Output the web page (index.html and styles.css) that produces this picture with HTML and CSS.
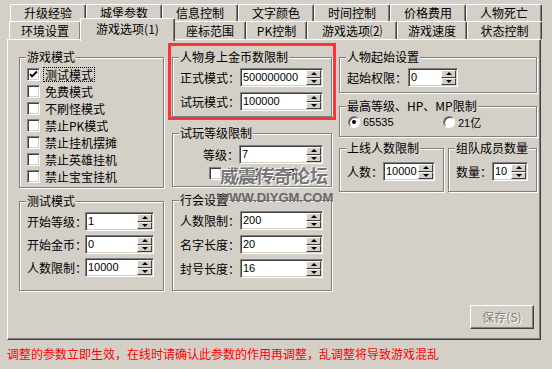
FILE: index.html
```html
<!DOCTYPE html>
<html lang="zh-CN">
<head>
  <meta charset="UTF-8">
  <title>游戏选项</title>
  <link rel="stylesheet" href="styles.css">
</head>
<body>
  <!-- 选项卡 -->
  <div class="tabs">
    <div class="tab-row top">
      <div class="tab">升级经验</div>
      <div class="tab">城堡参数</div>
      <div class="tab">信息控制</div>
      <div class="tab">文字颜色</div>
      <div class="tab">时间控制</div>
      <div class="tab">价格费用</div>
      <div class="tab">人物死亡</div>
    </div>
    <div class="tab-row bottom">
      <div class="tab t1">环境设置</div>
      <div class="tab on">游戏选项(1)</div>
      <div class="tab t3">座标范围</div>
      <div class="tab t4">PK控制</div>
      <div class="tab t5">游戏选项⑵</div>
      <div class="tab t6">游戏速度</div>
      <div class="tab t7">状态控制</div>
    </div>
  </div>

  <!-- 选项面板 -->
  <div class="panel">
    <div class="cols">
      <div class="col c1">
        <div class="grp g-mode">
          <span class="ttl">游戏模式</span>
          <div class="checks">
            <div class="chk"><span class="box"><svg width="11" height="11" viewBox="0 0 11 11"><polyline points="2,5 4,7.5 9,2.5" fill="none" stroke="#000" stroke-width="1.8"/></svg></span><span class="txt focus">测试模式</span></div>
            <div class="chk"><span class="box"></span><span class="txt">免费模式</span></div>
            <div class="chk"><span class="box"></span><span class="txt">不刷怪模式</span></div>
            <div class="chk"><span class="box"></span><span class="txt">禁止PK模式</span></div>
            <div class="chk"><span class="box"></span><span class="txt">禁止挂机摆摊</span></div>
            <div class="chk"><span class="box"></span><span class="txt">禁止英雄挂机</span></div>
            <div class="chk"><span class="box"></span><span class="txt">禁止宝宝挂机</span></div>
          </div>
        </div>
        <div class="grp g-test">
          <span class="ttl">测试模式</span>
          <div class="fld first"><span class="lbl l58">开始等级：</span><div class="spin w69"><span class="val">1</span><span class="arrows"><i class="up"></i><i class="dn"></i></span></div></div>
          <div class="fld"><span class="lbl l58">开始金币：</span><div class="spin w69"><span class="val">0</span><span class="arrows"><i class="up"></i><i class="dn"></i></span></div></div>
          <div class="fld"><span class="lbl l58">人数限制：</span><div class="spin w69"><span class="val">10000</span><span class="arrows"><i class="up"></i><i class="dn"></i></span></div></div>
        </div>
      </div>

      <div class="col c2">
        <div class="grp g-gold">
          <span class="ttl">人物身上金币数限制</span>
          <div class="fld first"><span class="lbl l60">正式模式：</span><div class="spin w83"><span class="val">500000000</span><span class="arrows"><i class="up"></i><i class="dn"></i></span></div></div>
          <div class="fld gap5"><span class="lbl l60">试玩模式：</span><div class="spin w83"><span class="val">100000</span><span class="arrows"><i class="up"></i><i class="dn"></i></span></div></div>
        </div>
        <div class="grp g-trial">
          <span class="ttl">试玩等级限制</span>
          <div class="fld gap5"><span class="lbl l59 right">等级：</span><div class="spin w84"><span class="val">7</span><span class="arrows"><i class="up"></i><i class="dn"></i></span></div></div>
          <div class="chk indent"><span class="box"></span><span class="txt">试玩模式启用</span></div>
        </div>
        <div class="grp g-guild">
          <span class="ttl">行会设置</span>
          <div class="fld first"><span class="lbl l60">人数限制：</span><div class="spin w83"><span class="val">200</span><span class="arrows"><i class="up"></i><i class="dn"></i></span></div></div>
          <div class="fld gap5"><span class="lbl l60">名字长度：</span><div class="spin w83"><span class="val">20</span><span class="arrows"><i class="up"></i><i class="dn"></i></span></div></div>
          <div class="fld gap5"><span class="lbl l60">封号长度：</span><div class="spin w83"><span class="val">16</span><span class="arrows"><i class="up"></i><i class="dn"></i></span></div></div>
        </div>
      </div>

      <div class="col c3">
        <div class="grp g-start">
          <span class="ttl">人物起始设置</span>
          <div class="fld first"><span class="lbl l61">起始权限：</span><div class="spin w50"><span class="val">0</span><span class="arrows"><i class="up"></i><i class="dn"></i></span></div></div>
        </div>
        <div class="grp g-max">
          <span class="ttl">最高等级、HP、MP限制</span>
          <div class="radios">
            <div class="opt"><span class="rad on"></span><span class="num">65535</span></div>
            <div class="opt"><span class="rad"></span><span class="num">21亿</span></div>
          </div>
        </div>
        <div class="pair">
          <div class="grp g-online">
            <span class="ttl">上线人数限制</span>
            <div class="fld low"><span class="lbl l36">人数：</span><div class="spin w52"><span class="val">10000</span><span class="arrows"><i class="up"></i><i class="dn"></i></span></div></div>
          </div>
          <div class="grp g-team">
            <span class="ttl">组队成员数量</span>
            <div class="fld low"><span class="lbl l36">数量：</span><div class="spin w36"><span class="val">10</span><span class="arrows"><i class="up"></i><i class="dn"></i></span></div></div>
          </div>
        </div>
      </div>
    </div>

    <div class="foot">
      <div class="btn">保存(S)</div>
    </div>

    <!-- 标注与水印 -->
    <div class="hl"></div>
    <div class="wm1">威震传奇论坛</div>
    <div class="wm2">WWW.DIYGM.COM</div>
  </div>

  <div class="note">调整的参数立即生效，在线时请确认此参数的作用再调整，乱调整将导致游戏混乱</div>
</body>
</html>
```

FILE: styles.css
```css
/* 基本设置 */
body {
  margin: 0;
  width: 552px;
  height: 369px;
  overflow: hidden;
  background: #d4d0c8;
  color: #000;
  font: 12px/1 "Noto Sans CJK SC", sans-serif;
}

/* 选项卡 */
.tabs {
  padding-top: 4px;
  height: 35px;
}
.tab-row {
  display: flex;
}
.tab-row.top {
  height: 17px;
  margin-left: 10px;
}
.tab-row.bottom {
  height: 18px;
  margin-left: 9px;
}
.tab {
  box-sizing: border-box;
  display: flex;
  align-items: center;
  justify-content: center;
  white-space: nowrap;
  background: #d4d0c8;
  border: 1px solid;
  border-bottom: 0;
  border-color: #fff #404040 #fff #fff;
  border-radius: 2px 2px 0 0;
  box-shadow: inset -1px 0 #808080;
}
.top .tab { width: 76px; }
.t1 { width: 72px; }
.t3 { width: 72px; }
.t4 { width: 61px; }
.t5 { width: 90px; }
.t6 { width: 70px; }
.t7 { width: 75px; }
.tab.on {
  position: relative;
  z-index: 1;
  align-self: flex-start;
  width: 95px;
  height: 23px;
  margin: -3px -1px 0;
  padding-bottom: 2px;
}

/* 面板 */
.panel {
  position: relative;
  box-sizing: border-box;
  width: 534px;
  height: 301px;
  margin-left: 7px;
  padding-top: 17px;
  border: 1px solid;
  border-color: #fff #404040 #404040 #fff;
  box-shadow: inset -1px -1px #808080;
}
.cols {
  display: flex;
  align-items: flex-start;
}
.col {
  display: flex;
  flex-direction: column;
}
.c1 { width: 145px; margin-left: 11px; }
.c2 { width: 160px; margin-left: 8px; }
.c3 { width: 198px; margin-left: 7px; }

/* 分组框 */
.grp {
  box-sizing: border-box;
  padding: 0 6px 0 7px;
  border: 1px solid #808080;
  box-shadow: inset 1px 1px #fff, 1px 1px #fff;
}
.ttl {
  display: block;
  width: max-content;
  margin: -8px 0 0 -1px;
  padding: 0 1px;
  line-height: 14px;
  background: #d4d0c8;
}
.g-mode { height: 131px; }
.g-test { height: 90px; margin-top: 13px; }
.g-gold { height: 60px; }
.g-trial { height: 54px; margin-top: 16px; }
.g-guild { height: 91px; margin-top: 13px; }
.g-start { height: 36px; }
.g-max { height: 31px; margin-top: 13px; }
.pair {
  display: flex;
  gap: 4px;
  margin-top: 11px;
}
.g-online { width: 105px; height: 44px; }
.g-team { width: 89px; height: 44px; }

/* 复选框 */
.checks {
  margin-top: 2px;
}
.chk {
  display: flex;
  align-items: center;
  height: 17px;
}
.chk.indent {
  margin: 1px 0 0 29px;
}
.box {
  box-sizing: border-box;
  width: 13px;
  height: 13px;
  flex: none;
  background: #fff;
  border: 1px solid;
  border-color: #808080 #fff #fff #808080;
  box-shadow: inset 1px 1px #404040, inset -1px -1px #d4d0c8;
}
.box svg {
  display: block;
}
.txt {
  margin-left: 3px;
  padding: 0 1px;
  line-height: 13px;
  border: 1px solid transparent;
  white-space: nowrap;
}
.txt.focus {
  border: 1px dotted #000;
}

/* 数值框 */
.fld {
  display: flex;
  align-items: center;
  height: 19px;
  margin-top: 4px;
}
.fld.gap5 { margin-top: 5px; }
.fld.low { margin-top: 7px; }
.lbl {
  flex: none;
  white-space: nowrap;
}
.lbl.right { text-align: right; }
.l36 { width: 36px; }
.l58 { width: 58px; }
.l59 { width: 59px; }
.l60 { width: 60px; }
.l61 { width: 61px; }
.spin {
  box-sizing: border-box;
  display: flex;
  height: 19px;
  padding: 1px;
  background: #fff;
  border: 1px solid;
  border-color: #808080 #fff #fff #808080;
  box-shadow: inset 1px 1px #404040, inset -1px -1px #d4d0c8;
}
.w36 { width: 36px; }
.w50 { width: 50px; }
.w52 { width: 52px; }
.w69 { width: 69px; }
.w83 { width: 83px; }
.w84 { width: 84px; }
.val {
  flex: 1;
  overflow: hidden;
  padding-left: 1px;
  font: 11px/15px "Liberation Sans", sans-serif;
}
.arrows {
  display: flex;
  flex-direction: column;
  width: 15px;
  flex: none;
}
.arrows i {
  flex: 1;
  display: flex;
  align-items: center;
  justify-content: center;
  background: #d4d0c8;
  border: 1px solid;
  border-color: #fff #404040 #404040 #fff;
}
.arrows i::before {
  content: "";
  border-left: 3px solid transparent;
  border-right: 3px solid transparent;
}
.arrows .up::before { border-bottom: 3px solid #000; }
.arrows .dn::before { border-top: 3px solid #000; }

/* 单选框 */
.radios {
  display: flex;
  height: 16px;
  margin-top: 1px;
}
.opt {
  display: flex;
  align-items: center;
}
.opt:first-child { width: 95px; }
.rad {
  box-sizing: border-box;
  width: 12px;
  height: 12px;
  margin-left: 1px;
  display: flex;
  align-items: center;
  justify-content: center;
  background: #fff;
  border-radius: 50%;
  border: 1px solid;
  border-color: #808080 #fff #fff #808080;
  box-shadow: inset 1px 1px #404040;
}
.rad.on::after {
  content: "";
  width: 4px;
  height: 4px;
  border-radius: 50%;
  background: #000;
}
.num {
  margin-left: 3px;
  font: 11px "Liberation Sans", "Noto Sans CJK SC", sans-serif;
}

/* 保存按钮 */
.foot {
  display: flex;
  justify-content: flex-end;
  margin-top: 14px;
  padding-right: 6px;
}
.btn {
  box-sizing: border-box;
  width: 64px;
  height: 24px;
  display: flex;
  align-items: center;
  justify-content: center;
  color: #808080;
  text-shadow: 1px 1px #fff;
  border: 1px solid;
  border-color: #fff #404040 #404040 #fff;
  box-shadow: inset -1px -1px #808080;
}

/* 红框与水印 */
.hl {
  position: absolute;
  left: 160px;
  top: 3px;
  width: 168px;
  height: 77px;
  box-sizing: border-box;
  border: 3px solid #f33;
}
.wm1 {
  position: absolute;
  left: 212px;
  top: 126px;
  font-size: 18px;
  line-height: 18px;
  font-weight: bold;
  color: #777;
  text-shadow: 1px 1px #fff, -1px -1px #eee;
  white-space: nowrap;
}
.wm2 {
  position: absolute;
  left: 209px;
  top: 151px;
  font: bold 13px/13px "Liberation Sans", sans-serif;
  color: #6a6a6a;
  white-space: nowrap;
}

/* 底部提示 */
.note {
  margin: 7px 0 0 7px;
  line-height: 14px;
  color: #f00;
  white-space: nowrap;
}
```
